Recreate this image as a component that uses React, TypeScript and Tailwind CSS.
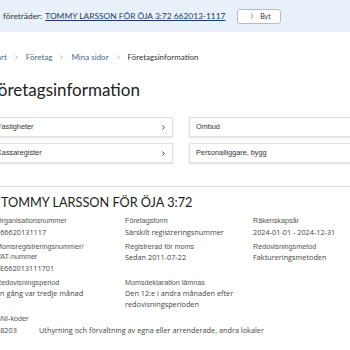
import { ChevronRight } from 'lucide-react';

type Field = { label: string[]; value: string[] };

const rows: Field[][] = [
  [
    { label: ['Organisationsnummer'], value: ['166620131117'] },
    { label: ['Företagsform'], value: ['Särskilt registreringsnummer'] },
    { label: ['Räkenskapsår'], value: ['2024-01-01 - 2024-12-31'] },
  ],
  [
    { label: ['Momsregistreringsnummer/', 'VAT-nummer'], value: ['SE662013111701'] },
    { label: ['Registrerad för moms'], value: ['Sedan 2011-07-22'] },
    { label: ['Redovisningsmetod'], value: ['Faktureringsmetoden'] },
  ],
  [
    { label: ['Redovisningsperiod'], value: ['En gång var tredje månad'] },
    { label: ['Momsdeklaration lämnas'], value: ['Den 12:e i andra månaden efter', 'redovisningsperioden'] },
  ],
];

const links = ['Fastigheter', 'Ombud', 'Kassaregister', 'Personalliggare, bygg'];

function InfoField({ field }: { field: Field }) {
  return (
    <div className="mb-[4.5px]">
      {field.label.map((l) => (
        <div key={l} className="font-['Liberation_Sans',sans-serif] text-[7.2px] leading-[10.5px] text-[#555]">
          {l}
        </div>
      ))}
      {field.value.map((v) => (
        <div key={v} className="font-['Open_Sans',sans-serif] text-[7.3px] leading-[10.5px] text-[#444]">
          {v}
        </div>
      ))}
    </div>
  );
}

export default function App() {
  return (
    <div className="w-[350px] h-[350px] overflow-hidden bg-white text-[#333]">
      {/* representative banner */}
      <div className="h-[32px] bg-[#e8f1f9] flex items-center pl-[3px] font-['Lato',sans-serif] text-[8.4px] whitespace-nowrap">
        <span className="text-[#333]">företräder:</span>
        <span className="ml-[3px] text-[#1c3b6b] underline underline-offset-[1px]">
          TOMMY LARSSON FÖR ÖJA 3:72 662013-1117
        </span>
        <button className="ml-[12px] w-[44px] h-[15px] border border-[#b8bcc2] rounded-[3px] bg-white flex items-center justify-center gap-[4px] text-[7px] text-[#333]">
          <ChevronRight size={8} strokeWidth={1.4} />
          Byt
        </button>
      </div>

      {/* breadcrumb */}
      <div className="mt-[17px] h-[16px] -ml-[10px] flex items-center gap-[6px] font-['Lato',sans-serif] text-[8px] whitespace-nowrap">
        <span className="text-[#46678f]">Start</span>
        <ChevronRight size={7} strokeWidth={1.5} className="text-[#666]" />
        <span className="text-[#46678f]">Företag</span>
        <ChevronRight size={7} strokeWidth={1.5} className="text-[#666]" />
        <span className="text-[#46678f]">Mina sidor</span>
        <ChevronRight size={7} strokeWidth={1.5} className="text-[#666]" />
        <span className="text-[#333]">Företagsinformation</span>
      </div>

      <h1 className="mt-[13px] -ml-[11px] h-[24px] leading-[24px] font-['Lato',sans-serif] text-[17px] text-[#222] whitespace-nowrap">
        Företagsinformation
      </h1>

      {/* link cards */}
      <div className="mt-[15px] -ml-[10px] grid grid-cols-[183px_183px] gap-x-[16px] gap-y-[6px]">
        {links.map((l) => (
          <div
            key={l}
            className="h-[20px] flex items-center justify-between pl-[6px] pr-[5px] bg-white border border-[#e2e2e2] shadow-[0_1px_2px_rgba(0,0,0,0.12)] font-['Liberation_Sans',sans-serif] text-[7.3px] text-[#333]"
          >
            <span>{l}</span>
            <ChevronRight size={7} strokeWidth={3} className="text-[#222]" />
          </div>
        ))}
      </div>

      <div className="mt-[23px] border-t border-[#dedede]" />

      <h2 className="mt-[6px] ml-[1px] h-[18px] leading-[18px] font-['Lato',sans-serif] text-[12.7px] text-[#222] whitespace-nowrap">
        TOMMY LARSSON FÖR ÖJA 3:72
      </h2>

      <div className="mt-[5px] -ml-[4px] whitespace-nowrap">
        {rows.map((row, i) => (
          <div key={i} className="grid grid-cols-[129px_128px_1fr]">
            {row.map((f) => (
              <InfoField key={f.label[0]} field={f} />
            ))}
          </div>
        ))}
        <div className="font-['Liberation_Sans',sans-serif] text-[7.2px] leading-[10.5px] text-[#555]">SNI-koder</div>
        <div className="flex font-['Open_Sans',sans-serif] text-[7.3px] leading-[12px] text-[#444]">
          <span className="w-[43px]">68203</span>
          <span>Uthyrning och förvaltning av egna eller arrenderade, andra lokaler</span>
        </div>
      </div>
    </div>
  );
}
